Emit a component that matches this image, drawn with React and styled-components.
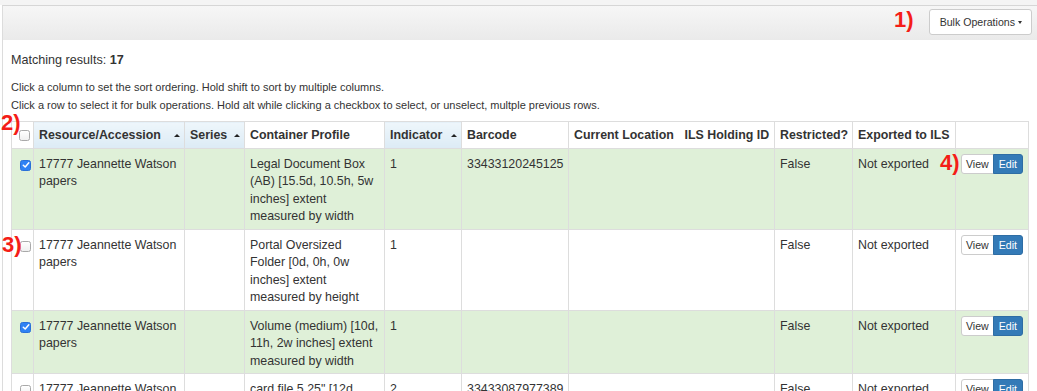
import React from "react";
import styled, { createGlobalStyle } from "styled-components";

const GlobalStyle = createGlobalStyle`
  html, body {
    margin: 0;
    overflow: hidden;
    background: #fff;
  }
  body {
    font-family: "Liberation Sans", Arial, sans-serif;
    color: #333;
    font-size: 12.4px;
  }
`;

const TopStrip = styled.div`
  height: 5px;
  background: #f4f4f4;
`;

const Panel = styled.div`
  margin-left: 2px;
  border-left: 1px solid #dcdcdc;
  border-top: 1px solid #d6d6d6;
`;

const Toolbar = styled.div`
  height: 34px;
  box-sizing: border-box;
  display: flex;
  align-items: flex-start;
  justify-content: flex-end;
  padding: 3px 5px 0 0;
  background: linear-gradient(#f6f6f6, #eaeaea);
`;

const Note = styled.span`
  position: ${(p) => (p.$inline ? "static" : "absolute")};
  top: ${(p) => p.$top || 0}px;
  left: ${(p) => p.$left || 0}px;
  margin: ${(p) => (p.$inline ? "0 15px 0 0" : "0")};
  font-family: "Liberation Sans", Arial, sans-serif;
  font-weight: bold;
  font-size: 22px;
  line-height: 22px;
  color: #f41d17;
  z-index: 2;
`;

const BulkButton = styled.button`
  height: 26px;
  padding: 0 9px 0 10px;
  display: flex;
  align-items: center;
  font-family: "Liberation Sans", Arial, sans-serif;
  font-size: 10.6px;
  color: #333;
  background: #fff;
  border: 1px solid #ccc;
  border-radius: 3px;
`;

const Caret = styled.span`
  display: inline-block;
  margin-left: 3px;
  border-top: 3px solid #333;
  border-left: 2.5px solid transparent;
  border-right: 2.5px solid transparent;
`;

const Content = styled.div`
  padding: 11px 9px 0 8px;
`;

const Summary = styled.div`
  font-size: 12.6px;
  line-height: 18px;
  margin-bottom: 10px;
`;

const Hint = styled.p`
  margin: 0;
  font-size: 11px;
  line-height: 17.5px;
`;

const TableWrap = styled.div`
  position: relative;
  margin-top: 7px;
`;

const Table = styled.table`
  width: 1017px;
  table-layout: fixed;
  border-collapse: collapse;
  font-size: 12.4px;
  line-height: 17.5px;
`;

const Th = styled.th`
  border: 1px solid #ddd;
  padding: 5px 4px 3px 5px;
  text-align: left;
  font-weight: bold;
  white-space: nowrap;
  vertical-align: middle;
  background: ${(p) => (p.$sorted ? "linear-gradient(#eef6fb, #dcebf5)" : "#fff")};
  ${(p) => p.$seam && "border-right-style: hidden;"}
`;

const HeadInner = styled.div`
  display: flex;
  align-items: center;
  justify-content: space-between;
`;

const SortArrow = styled.span`
  border-bottom: 3px solid #222;
  border-left: 3px solid transparent;
  border-right: 3px solid transparent;
`;

const Row = styled.tr`
  background: ${(p) => (p.$selected ? "#dff0d8" : "#fff")};
`;

const Td = styled.td`
  position: relative;
  border: 1px solid #ddd;
  padding: 7px 4px 3px 5px;
  vertical-align: top;
  ${(p) => p.$seam && "border-right-style: hidden;"}
`;

const CheckTd = styled(Td)`
  padding: 6px 0 0 7px;
`;

const ActionTd = styled(Td)`
  padding: 5px 4px 4px 5px;
`;

const Box = styled.span`
  display: flex;
  align-items: center;
  justify-content: center;
  box-sizing: border-box;
  width: 11px;
  height: 11px;
  margin: ${(p) => (p.$head ? "0 0 0 2px" : "5px 0 0 1px")};
  border-radius: 2.5px;
  border: 1px solid ${(p) => (p.$checked ? "#2a70d8" : "#a9a9a9")};
  background: ${(p) => (p.$checked ? "#2f82f4" : "linear-gradient(#fff, #efefef)")};
`;

const Line = styled.span`
  display: block;
`;

const BtnGroup = styled.div`
  display: flex;
`;

const SmallBtn = styled.button`
  height: 20px;
  padding: 0 ${(p) => (p.$primary ? "5px" : "4px")};
  font-family: "Liberation Sans", Arial, sans-serif;
  font-size: 10.6px;
  color: ${(p) => (p.$primary ? "#fff" : "#333")};
  background: ${(p) => (p.$primary ? "#337ab7" : "#fff")};
  border: 1px solid ${(p) => (p.$primary ? "#2e6da4" : "#ccc")};
  border-radius: ${(p) => (p.$primary ? "0 3px 3px 0" : "3px 0 0 3px")};
  & + & {
    margin-left: -1px;
  }
`;

const columns = [22, 151, 60, 140, 77, 107, 111, 95, 78, 103, 73];

const rows = [
  {
    selected: true,
    profile: ["Legal Document Box", "(AB) [15.5d, 10.5h, 5w", "inches] extent", "measured by width"],
    indicator: "1",
    barcode: "33433120245125",
    actionNote: true,
  },
  {
    selected: false,
    profile: ["Portal Oversized", "Folder [0d, 0h, 0w", "inches] extent", "measured by height"],
    indicator: "1",
    barcode: "",
    checkNote: true,
  },
  {
    selected: true,
    profile: ["Volume (medium) [10d,", "11h, 2w inches] extent", "measured by width"],
    indicator: "1",
    barcode: "",
  },
  {
    selected: false,
    profile: ["card file 5.25\" [12d", "5h, 3w inches] extent", "measured by width"],
    indicator: "2",
    barcode: "33433087977389",
  },
];

function Checkbox({ checked, head }) {
  return (
    <Box $checked={checked} $head={head}>
      {checked && (
        <svg width="8" height="8" viewBox="0 0 8 8">
          <path d="M1.3 4.2 L3.2 6 L6.8 1.8" fill="none" stroke="#fff" strokeWidth="1.5" strokeLinecap="round" strokeLinejoin="round" />
        </svg>
      )}
    </Box>
  );
}

function SortHead({ children }) {
  return (
    <Th $sorted>
      <HeadInner>
        {children}
        <SortArrow />
      </HeadInner>
    </Th>
  );
}

export default function App() {
  return (
    <>
      <GlobalStyle />
      <TopStrip />
      <Panel>
        <Toolbar>
          <Note $inline>1)</Note>
          <BulkButton>
            Bulk Operations
            <Caret />
          </BulkButton>
        </Toolbar>
        <Content>
          <Summary>
            Matching results: <b>17</b>
          </Summary>
          <Hint>Click a column to set the sort ordering. Hold shift to sort by multiple columns.</Hint>
          <Hint>
            Click a row to select it for bulk operations. Hold alt while clicking a checkbox to select, or unselect, multple previous rows.
          </Hint>
          <TableWrap>
            <Note $top={-9} $left={-10}>2)</Note>
            <Table>
              <colgroup>
                {columns.map((w, i) => (
                  <col key={i} style={{ width: w }} />
                ))}
              </colgroup>
              <thead>
                <tr>
                  <Th>
                    <Checkbox head />
                  </Th>
                  <SortHead>Resource/Accession</SortHead>
                  <SortHead>Series</SortHead>
                  <Th>Container Profile</Th>
                  <SortHead>Indicator</SortHead>
                  <Th>Barcode</Th>
                  <Th $seam>Current Location</Th>
                  <Th>ILS Holding ID</Th>
                  <Th>Restricted?</Th>
                  <Th>Exported to ILS</Th>
                  <Th />
                </tr>
              </thead>
              <tbody>
                {rows.map((r, i) => (
                  <Row key={i} $selected={r.selected}>
                    <CheckTd>
                      {r.checkNote && <Note $top={4} $left={-10}>3)</Note>}
                      <Checkbox checked={r.selected} />
                    </CheckTd>
                    <Td>17777 Jeannette Watson papers</Td>
                    <Td />
                    <Td>
                      {r.profile.map((l, j) => (
                        <Line key={j}>{l}</Line>
                      ))}
                    </Td>
                    <Td>{r.indicator}</Td>
                    <Td>{r.barcode}</Td>
                    <Td $seam />
                    <Td />
                    <Td>False</Td>
                    <Td>Not exported</Td>
                    <ActionTd>
                      {r.actionNote && <Note $top={3} $left={-16}>4)</Note>}
                      <BtnGroup>
                        <SmallBtn>View</SmallBtn>
                        <SmallBtn $primary>Edit</SmallBtn>
                      </BtnGroup>
                    </ActionTd>
                  </Row>
                ))}
              </tbody>
            </Table>
          </TableWrap>
        </Content>
      </Panel>
    </>
  );
}
